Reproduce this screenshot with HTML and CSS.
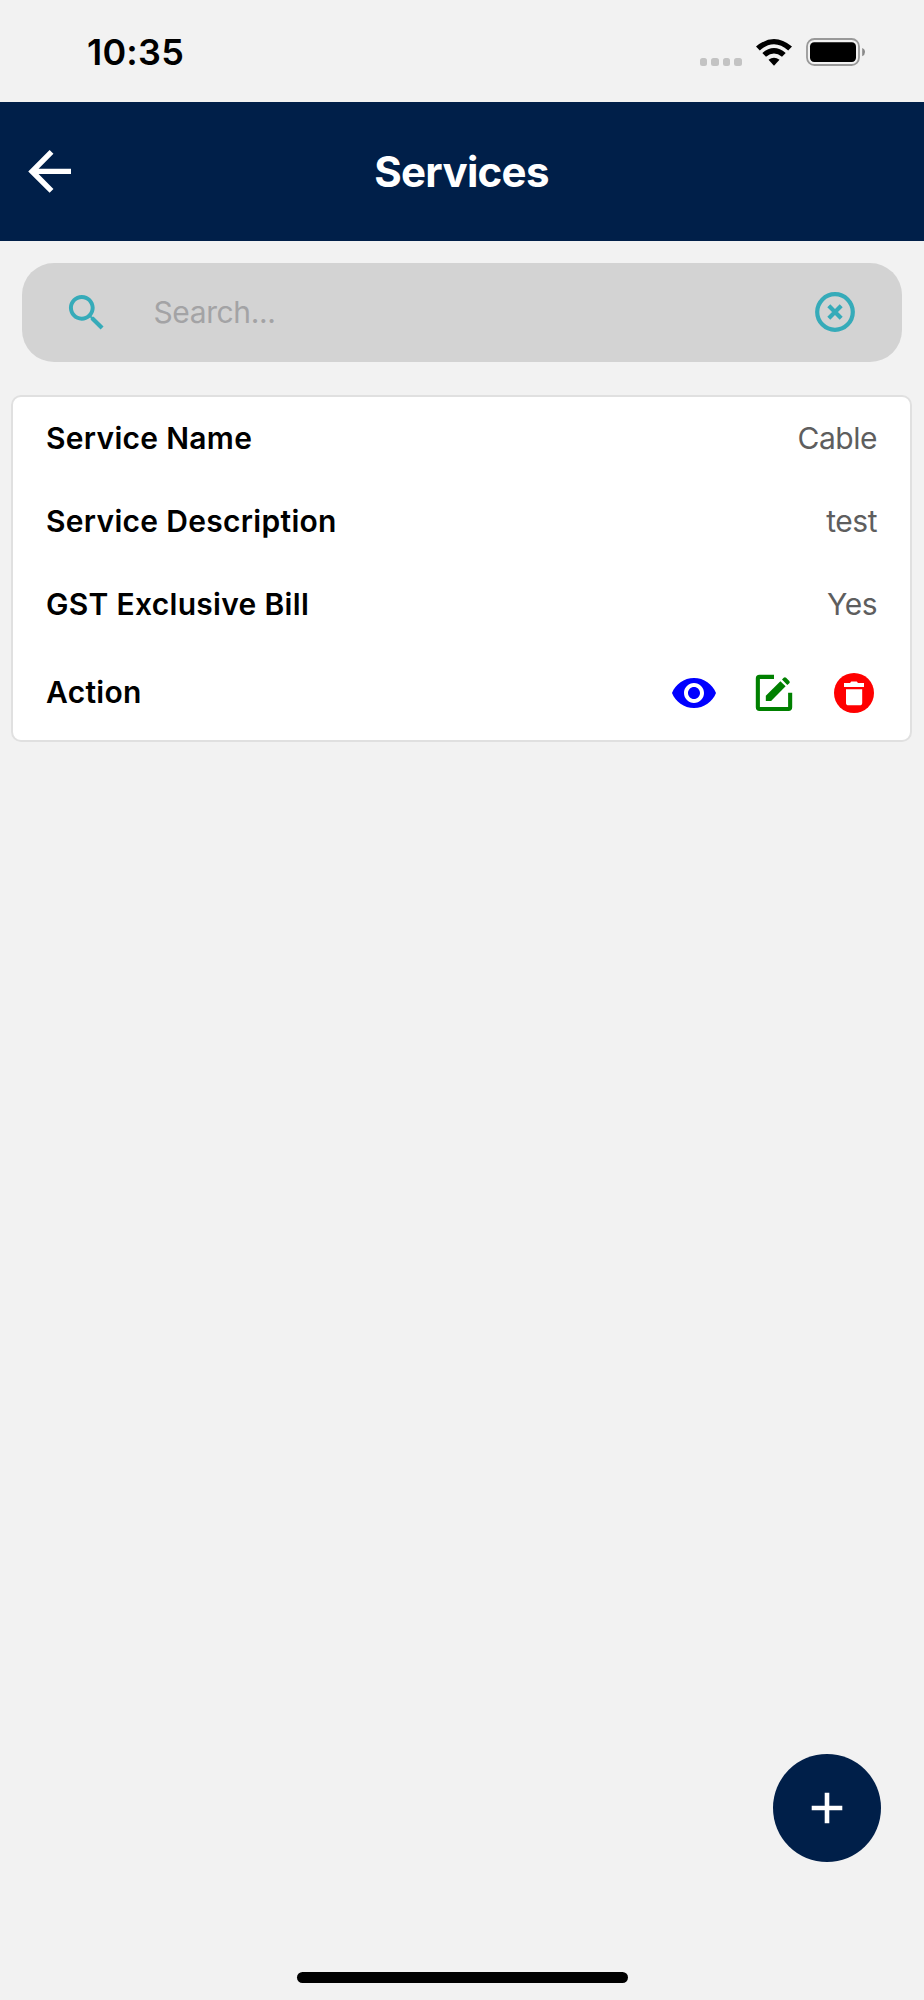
FILE: index.html
```html
<!DOCTYPE html>
<html lang="en">
<head>
  <meta charset="UTF-8" />
  <meta name="viewport" content="width=device-width, initial-scale=1.0"/>
  <title>Services</title>
  <link rel="stylesheet" href="styles.css">
</head>
<body>

  <div class="status-bar">
    <span class="time">10:35</span>
    <div class="status-icons">
      <div class="signal"><i></i><i></i><i></i><i></i></div>
      <svg class="wifi" viewBox="0 0 36 27">
        <path d="M0 7.6Q18 -7.6 36 7.6L32.2 11.4Q18 -1.1 3.8 11.4Z"/>
        <path d="M6.3 14Q18 4 29.7 14L26 17.7Q18 11.2 10 17.7Z"/>
        <path d="M12.5 20.7Q18 16.8 23.5 20.7L18 26.7Z"/>
      </svg>
      <svg class="battery" viewBox="0 0 60 28">
        <rect x="1" y="1" width="52" height="26" rx="7.5" fill="none" stroke="#999" stroke-width="1.8"/>
        <rect x="4" y="4.2" width="46" height="19.8" rx="4.2"/>
        <path d="M56.2 10Q59 11 59 14T56.2 18.2Z" fill="#8a8a8a"/>
      </svg>
    </div>
  </div>

  <header class="header">
    <svg class="back" viewBox="0 0 24 24"><path d="M20,11V13H8L13.5,18.5L12.08,19.92L4.16,12L12.08,4.08L13.5,5.5L8,11H20Z"/></svg>
    <h1>Services</h1>
  </header>

  <div class="search">
    <svg class="search-icon" viewBox="0 0 24 24"><path d="M15.5 14h-.79l-.28-.27C15.41 12.59 16 11.11 16 9.5 16 5.91 13.09 3 9.5 3S3 5.91 3 9.5 5.91 16 9.5 16c1.61 0 3.09-.59 4.23-1.57l.27.28v.79l5 4.99L20.49 19l-4.99-5zm-6 0C7.01 14 5 11.99 5 9.5S7.01 5 9.5 5 14 7.01 14 9.5 11.99 14 9.5 14z"/></svg>
    <span class="placeholder">Search...</span>
    <svg class="clear" viewBox="0 0 40 40">
      <circle cx="20" cy="20" r="17.8"/>
      <path d="M13.8 13.8L26.2 26.2M26.2 13.8L13.8 26.2"/>
    </svg>
  </div>

  <main class="card">
    <div class="row">
      <span class="label">Service Name</span>
      <span class="value">Cable</span>
    </div>
    <div class="row">
      <span class="label">Service Description</span>
      <span class="value">test</span>
    </div>
    <div class="row">
      <span class="label">GST Exclusive Bill</span>
      <span class="value">Yes</span>
    </div>
    <div class="row row-action">
      <span class="label">Action</span>
      <div class="actions">
        <svg viewBox="0 0 24 24" fill="blue"><path d="M12 4.5C7 4.5 2.73 7.61 1 12c1.73 4.39 6 7.5 11 7.5s9.27-3.11 11-7.5c-1.73-4.39-6-7.5-11-7.5zM12 17c-2.76 0-5-2.24-5-5s2.24-5 5-5 5 2.24 5 5-2.24 5-5 5zm0-8c-1.66 0-3 1.34-3 3s1.34 3 3 3 3-1.34 3-3-1.34-3-3-3z"/></svg>
        <svg viewBox="0 0 48 48" fill="green">
          <path d="M24 5.8H9.5Q5.8 5.8 5.8 9.5V38.3Q5.8 42 9.5 42H38.5Q42.2 42 42.2 38.3V23.8H38.1V38H9.9V9.9H24Z"/>
          <path d="M15.8 26.7L30.4 12.2L35.6 17.2L21.1 32H15.8Z"/>
          <path d="M32 10.6L33.7 8.8Q34.9 7.6 36.1 8.8L39.3 12Q40.4 13.2 39.3 14.3L37.3 16Z"/>
        </svg>
        <svg viewBox="0 0 48 48">
          <circle cx="24" cy="24" r="20" fill="red"/>
          <path fill="#fff" d="M14 14H20L21.3 12.4H26.7L28 14H34V18H14Z"/>
          <path fill="#fff" d="M16 20.3H32.2V33.7Q32.2 36.3 29.6 36.3H18.6Q16 36.3 16 33.7Z"/>
        </svg>
      </div>
    </div>
  </main>

  <div class="bottom">
    <div class="fab">
      <svg viewBox="0 0 32 32"><path d="M16 .7V31.3M.7 16H31.3"/></svg>
    </div>
    <div class="home-indicator"></div>
  </div>

</body>
</html>
```
FILE: styles.css
```css
* {
  box-sizing: border-box;
}

body {
  font-family: Inter, 'Liberation Sans', sans-serif;
  margin: 0;
  height: 2000px;
  display: flex;
  flex-direction: column;
  background-color: #f2f2f2;
  color: black;
}

svg {
  display: block;
  flex: none;
}

.status-bar {
  height: 101.5px;
  padding: 3px 58px 0 87px;
  display: flex;
  align-items: center;
  justify-content: space-between;
}

.time {
  font-size: 36px;
  font-weight: 600;
  letter-spacing: 0.2px;
}

.status-icons {
  display: flex;
  align-items: center;
}

.signal {
  display: flex;
  gap: 4px;
  margin: 20px 14px 0 0;
}

.signal i {
  width: 7.6px;
  height: 7.6px;
  border-radius: 2.5px;
  background-color: #c3c3c3;
}

.wifi {
  width: 36px;
  height: 27px;
  margin-right: 14px;
}

.battery {
  width: 60px;
  height: 28px;
}

.header {
  height: 139.5px;
  padding: 0 17px;
  display: flex;
  align-items: center;
  background-color: #001f49;
  color: white;
}

.back {
  width: 64.8px;
  height: 64.8px;
  fill: white;
}

h1 {
  flex: 1;
  margin: 0 65.8px 0 0;
  font-size: 42px;
  font-weight: 700;
  letter-spacing: -0.7px;
  text-align: center;
}

.search {
  height: 98.5px;
  margin: 22px 22px 33px;
  padding: 0 47px 0 41px;
  display: flex;
  align-items: center;
  border-radius: 32px;
  background-color: #d3d3d3;
}

.search-icon {
  width: 47.5px;
  height: 47.5px;
  fill: #36abb9;
}

.placeholder {
  flex: 1;
  margin-left: 43px;
  font-size: 30px;
  letter-spacing: -0.4px;
  color: #a3a3a5;
}

.clear {
  width: 40px;
  height: 40px;
  fill: none;
  stroke: #36abb9;
  stroke-width: 4.2;
}

.card {
  height: 347px;
  margin: 0 12px 0 11px;
  padding: 0 33px;
  border: 2px solid #e0e0e0;
  border-radius: 10px;
  background-color: white;
}

.row {
  height: 83.2px;
  display: flex;
  align-items: center;
  justify-content: space-between;
  font-size: 30px;
}

.row-action {
  height: 92px;
}

.label {
  font-weight: 600;
  letter-spacing: 0.3px;
}

.value {
  letter-spacing: -0.5px;
  color: #5e5e5e;
}

.actions {
  display: flex;
  gap: 32px;
  margin: 1px -1px 0 0;
}

.actions svg {
  width: 48px;
  height: 48px;
}

.bottom {
  margin-top: auto;
  display: flex;
  flex-direction: column;
}

.fab {
  width: 108px;
  height: 108px;
  margin: 0 43px 110px auto;
  display: flex;
  align-items: center;
  justify-content: center;
  border-radius: 50%;
  background-color: #001f49;
}

.fab svg {
  width: 32px;
  height: 32px;
  stroke: white;
  stroke-width: 4.6;
}

.home-indicator {
  width: 331px;
  height: 11px;
  margin: 0 auto 17.5px;
  border-radius: 6px;
  background-color: black;
}
```
